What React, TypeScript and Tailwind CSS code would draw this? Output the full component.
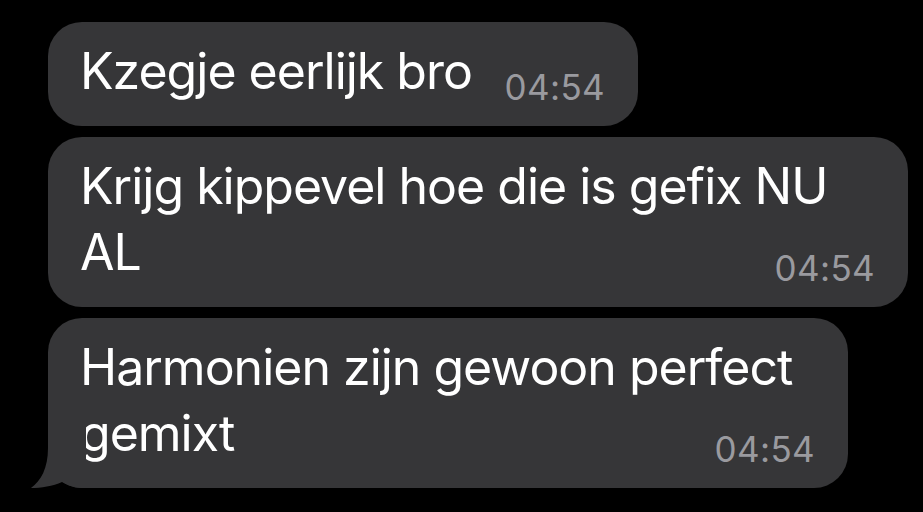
import React from 'react'

const messages = [
  { text: 'Kzegje eerlijk bro', time: '04:54', width: 'w-[590px]', tail: false },
  { text: 'Krijg kippevel hoe die is gefix NU AL', time: '04:54', width: 'w-[860px]', tail: false },
  { text: 'Harmonien zijn gewoon perfect gemixt', time: '04:54', width: 'w-[800px]', tail: true },
]

function Tail() {
  return (
    <svg
      className="absolute left-[-18px] bottom-0"
      width="56"
      height="62"
      viewBox="0 0 56 62"
      fill="#363638"
    >
      <path d="M18 0 L18 22 C18 42 11 55 1 62 C11 62 23 60 32 56 C39 60 46 62 56 62 L56 0 Z" />
    </svg>
  )
}

export default function App() {
  return (
    <div
      className="w-[923px] h-[512px] bg-black overflow-hidden flex flex-col gap-[11px] pt-[22px] pl-[48px]"
      style={{ fontFamily: 'Inter, "Noto Sans", sans-serif' }}
    >
      {messages.map((m, i) => (
        <div
          key={i}
          className={`relative ${m.width} rounded-[34px] bg-[#363638] pl-[32px] pr-[33px] pt-[16px] pb-[22px] text-white text-[50px] leading-[66px] tracking-[-0.02em]`}
        >
          {m.tail && <Tail />}
          {m.text}
          <span className="float-right ml-[24px] mt-[32px] text-[35px] leading-[34px] tracking-[0.01em] text-[#9a9a9f]">
            {m.time}
          </span>
        </div>
      ))}
    </div>
  )
}
